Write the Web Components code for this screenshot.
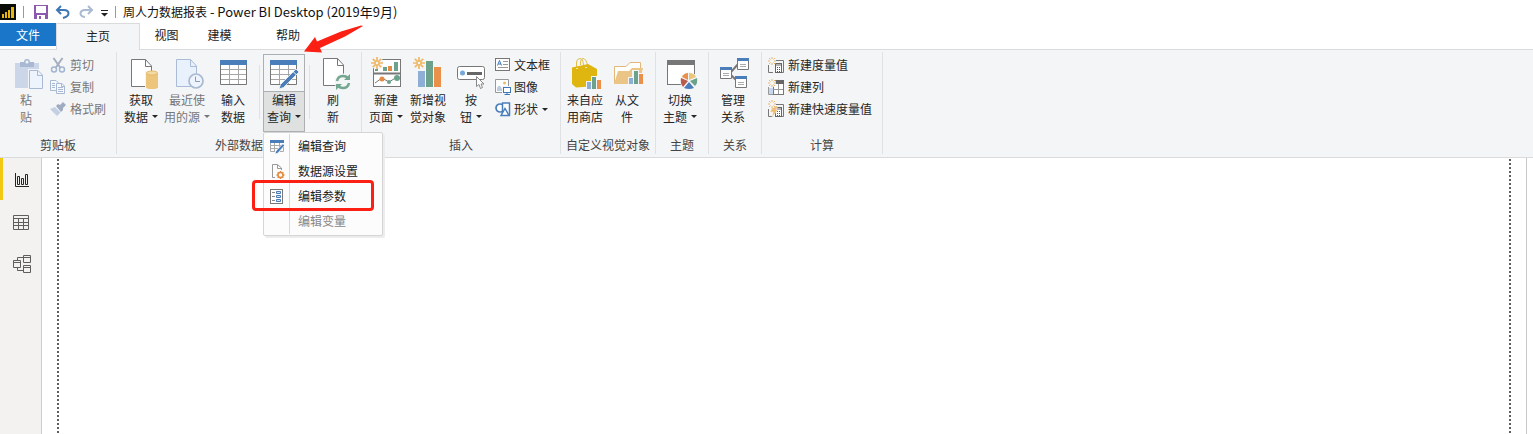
<!DOCTYPE html>
<html lang="zh-CN">
<head>
<meta charset="utf-8">
<title>周人力数据报表 - Power BI Desktop</title>
<style>
html, body { height: 100%; margin: 0; }
body { font: 12px/17px "Noto Sans CJK SC", sans-serif; color: #262626; background: #fff; overflow: hidden; }
</style>
</head>
<body>
<report-app></report-app>
<script>
const spark = (x, y, r) => {
  const d = r * 0.7, i = r * 0.35;
  return `<g stroke="#efb867" fill="none" stroke-width="${r > 5 ? 1.7 : 1}"><path d="M${x} ${y - r}V${y - i * 1.3}M${x} ${y + i * 1.3}V${y + r}M${x - r} ${y}H${x - i * 1.3}M${x + i * 1.3} ${y}H${x + r}M${x - d} ${y - d}L${x - i} ${y - i}M${x + d} ${y - d}L${x + i} ${y - i}M${x - d} ${y + d}L${x - i} ${y + i}M${x + d} ${y + d}L${x + i} ${y + i}"/><circle cx="${x}" cy="${y}" r="${i}"/></g>`;
};
const smallSpark = (x, y) => `<circle cx="${x}" cy="${y}" r="4" fill="#f4f5f7"/><path d="M${x} ${y - 4}V${y - 2}M${x} ${y + 2}V${y + 4}M${x - 4} ${y}H${x - 2}M${x + 2} ${y}H${x + 4}M${x - 3} ${y - 3}L${x - 1.5} ${y - 1.5}M${x + 3} ${y - 3}L${x + 1.5} ${y - 1.5}M${x - 3} ${y + 3}L${x - 1.5} ${y + 1.5}M${x + 3} ${y + 3}L${x + 1.5} ${y + 1.5}" stroke="#e9b568" fill="none"/>`;
const shift = (x, y, art) => `<g transform="translate(${x} ${y})">${art}</g>`;
const calc = '<path d="M8 3.5H15.5V15.5H14M.5 8V15.5H5" stroke="#777" fill="none"/><rect x="7.5" y="6.5" width="6" height="9" fill="#fff" stroke="#666"/><path d="M8 8H13" stroke="#666"/><path d="M9 10.5H10M11 10.5H12M9 12.5H10M11 12.5H12M9 14.5H10M11 14.5H12" stroke="#555"/>';
const grid = '<rect x="1" y="2" width="27" height="25" fill="#fff"/><path d="M1.5 6V26.500H27.500V6" fill="none" stroke="#777"/><path d="M2 11.500H27M2 16.500H27M2 21.500H27M10.500 7V26M19.500 7V26" stroke="#a6a6a6"/><rect x="1" y="2" width="27" height="5" fill="#4a7ebb"/>';
const sheet = (fill, stroke) => `<path d="M2.500 2.500H16.500L22.500 9V29.500H2.500Z" fill="${fill}" stroke="${stroke}"/><path d="M16.500 2.500V9.500H22.500" fill="none" stroke="${stroke}"/>`;

/* name: [width, height, drawing] */
const ICONS = {
  logo: [16, 16, '<rect width="16" height="16" fill="#0b0b05"/><path d="M2 10H4V14H2ZM5 8H7V14H5ZM8 6H10V14H8ZM11 3H14V14H11Z" fill="#e8b410"/>'],
  save: [14, 14, '<path d="M0 0H14V14H0Z" fill="#8d59ae"/><rect x="2" y="1" width="10" height="7" fill="#fff"/><rect x="3" y="10" width="8" height="4" fill="#fff"/><rect x="5" y="11" width="2" height="3" fill="#8d59ae"/>'],
  undo: [16, 14, '<path d="M6 1L2 5L6 9M2 5H9Q13.500 5 13.500 8.500Q13.500 11.500 8 13" fill="none" stroke="#3f78b5" stroke-width="2"/>'],
  redo: [16, 14, '<path d="M10 1L14 5L10 9M14 5H7Q2.500 5 2.500 8.500Q2.500 11.500 7 12" fill="none" stroke="#a9bad2" stroke-width="2"/>'],
  more: [7, 10, '<path d="M0 3.500H7" stroke="#222"/><path d="M0 6H7L3.500 9.500Z" fill="#222"/>'],
  paste: [30, 32, shift(3, 0, '<path d="M1 5H25V30H1Z" fill="#cbd6e8"/><path d="M6 9V4H10Q10 1 13 1Q16 1 16 4H20V9Z" fill="#aab9d3"/><circle cx="13" cy="4" r="1.500" fill="#f4f5f7"/><path d="M14 11H25V31H14Z" fill="#f4f5f7"/><path d="M15.500 12.500H24L28.500 17V30.500H15.500Z" fill="#eef4fd" stroke="#aab9d3"/><path d="M23.500 12.500V17.500H28.500" fill="none" stroke="#aab9d3"/>')],
  cut: [16, 16, '<path d="M3.500 1L10.500 11M12.500 1L5.500 11" stroke="#a4aebf" stroke-width="2"/><circle cx="4" cy="12.500" r="2.500" fill="none" stroke="#a3b5d1" stroke-width="1.500"/><circle cx="12" cy="12.500" r="2.500" fill="none" stroke="#a3b5d1" stroke-width="1.500"/>'],
  copy: [16, 16, '<path d="M.5 1.500H6L9.500 5V11.500H.5Z" fill="#f5f8fd" stroke="#a9b9d1"/><path d="M6.500 4.500H12L14.500 7V14.500H6.500Z" fill="#f5f8fd" stroke="#a9b9d1"/><path d="M2 4.500H5M2 6.500H5M2 8.500H5M8 8.500H13M8 10.500H13M8 12.500H13M11.500 4.500V7.500H14" stroke="#a9b9d1" fill="none"/>'],
  brush: [16, 16, '<path d="M10 4L13 1L16 4L13 7L13 9L11 11L6 5L8 3Z" fill="#9eabc0"/><path d="M5 6L10.500 11.500L7 15L0 8Z" fill="#c3cfe2"/>'],
  getdata: [30, 32, shift(3, -1, sheet('#fff', '#777') + '<path d="M16 14H23V30H16Z" fill="#f4f5f7"/><path d="M17 16V30Q17 32 23 32Q29 32 29 30V16Z" fill="#ecc57a"/><ellipse cx="23" cy="16" rx="5.500" ry="2" fill="#f3d9a4" stroke="#e7b965"/>')],
  recent: [30, 32, shift(2, -1, sheet('#e9f1fc', '#aabbd5') + '<circle cx="22" cy="24" r="7" fill="#edf4fe" stroke="#a9b9d1" stroke-width="1.700"/><path d="M21.500 19.500V24.500H26" fill="none" stroke="#8f9bae"/>')],
  table: [30, 32, shift(1, 0, grid)],
  edit: [30, 32, grid + '<path d="M10 31L11.500 26.500L27 11L30 14L14.500 29.500Z" fill="#4a7ebb" stroke="#f5f5f5" stroke-width=".8"/><path d="M24 13.500L27.500 17" stroke="#f3f3f3"/>'],
  refresh: [30, 32, shift(3, -2, sheet('#fff', '#777')) + shift(2, 0, '<circle cx="23" cy="24" r="8.500" fill="#f4f5f7"/><path d="M17 23Q18 18 23 18Q26 18 28 20M29 25Q28 30 23 30Q20 30 18 28" fill="none" stroke="#74a78f" stroke-width="2.500"/><path d="M30 16V22H24ZM16 32V26H22Z" fill="#74a78f"/>')],
  page: [32, 32, shift(1, -1, '<rect x="2.500" y="2.500" width="27" height="27" fill="#fff" stroke="#777"/><path d="M2 16.500H30" stroke="#777" stroke-width="2"/><path d="M12 10H16V14H12ZM23 5H27V14H23Z" fill="#6ca28b"/><path d="M17 9H21V14H17Z" fill="#e48c43"/><path d="M4 26L11 21L18 25L26 20" fill="none" stroke="#777"/><circle cx="11" cy="22" r="2.500" fill="#e48c43"/><circle cx="18" cy="25" r="2" fill="#6ca28b"/><circle cx="26" cy="21" r="3" fill="#6ca28b"/><circle cx="6" cy="6" r="6.500" fill="#f4f5f7"/><path d="M4 12H7V14H4Z" fill="#6ca28b"/>' + spark(6, 6, 6))],
  visual: [30, 32, shift(-1, -2, '<path d="M6 15H13V31H6Z" fill="#8eaed5"/><path d="M14 5H21V31H14Z" fill="#6ca28b"/><path d="M22 11H29V31H22Z" fill="#e9914b"/>') + spark(6, 5, 6)],
  button: [30, 32, '<rect x="1.500" y="8.500" width="27" height="13" rx="2" fill="#fff" stroke="#777"/><circle cx="6.500" cy="15" r="2.500" fill="#75a7db"/><path d="M11 15.500H26" stroke="#666" stroke-width="3"/><path d="M20.500 18.500V28.500L23 26.500L24.500 30.500L26.500 29.500L25 26H28Z" fill="#fff" stroke="#888"/>'],
  textbox: [16, 16, '<rect x="1.500" y="1.500" width="14" height="12" fill="#fff" stroke="#777"/><path d="M3.500 8.500L5.500 3.500L7.500 8.500M4.500 7H7" stroke="#3f78b5" fill="none"/><path d="M9 4.500H14M9 7.500H14M4 10.500H14" stroke="#999"/>'],
  image: [16, 16, shift(1, 0, '<path d="M.5 .5H13.500V13.500H.5Z" fill="#fff" stroke="#999"/><path d="M2 12V9Q4 5 6 8L8 12Z" fill="#bdcce1"/><circle cx="9.500" cy="4" r="1.500" fill="#ecbc6d"/><path d="M7 7H16V16H7Z" fill="#f4f5f7"/><rect x="8.500" y="8.500" width="7" height="5" fill="#fff" stroke="#3f78b5"/><path d="M12 14V16M9.500 15.500H15" stroke="#3f78b5"/>')],
  shape: [16, 16, shift(1, 0, '<circle cx="5" cy="7" r="4" fill="#fff" stroke="#4a7ebb" stroke-width="1.700"/><path d="M7.500 2H14.500V14H7.500Z" fill="#fff" stroke="#4a7ebb" stroke-width="1.500"/><path d="M6 14.500L10 7.500L14 14.500Z" fill="#fff" stroke="#4a7ebb" stroke-width="1.500"/>')],
  store: [32, 32, shift(1, 0, '<path d="M6.500 9V4Q7 .5 10 .5Q13 .5 13.500 7M10.500 7V4Q11 .5 13 .5Q16 .5 17.500 7" fill="none" stroke="#e0c04a"/><path d="M2 9.500L18 6L27 11V28L6 29.500L2 26Z" fill="#dfb60f"/><path d="M6 10.500H8M15 9.500H17" stroke="#f6e7a0"/><path d="M16 23H21V31H16ZM21 18H27V31H21ZM26 21H32V31H26Z" fill="#f4f5f7"/><path d="M17 24H21V31H17Z" fill="#8eaed5"/><path d="M22 19H26V31H22Z" fill="#6ca28b"/><path d="M27 22H31V31H27Z" fill="#e9914b"/>')],
  file: [32, 32, shift(2, -1, '<path d="M1.500 26V9.500H13L17 5.500H27.500V17" fill="#fff" stroke="#e2b878"/><path d="M1 27L5 14H16L19 11H30L26 27Z" fill="#ebc585"/><path d="M15 20H20V27H15ZM19 13H26V27H19ZM24 16H31V27H24Z" fill="#f4f5f7"/><path d="M16 21H20V27H16Z" fill="#8eaed5"/><path d="M21 14H25V27H21Z" fill="#6ca28b"/><path d="M26 17H30V27H26Z" fill="#e9914b"/>')],
  theme: [32, 32, shift(1, -1, '<rect x="2.500" y="3.500" width="27" height="24" fill="#fff" stroke="#777"/><rect x="2" y="3" width="28" height="5" fill="#777"/><circle cx="24" cy="24" r="9" fill="#f4f5f7"/><path d="M24 23V16Q29 16 31 20Z" fill="#ecc57a"/><path d="M25 24L32 21Q33 26 30 29Z" fill="#6ca28b"/><path d="M24 25L29 31Q24 33 19 31Z" fill="#4a7ebb"/><path d="M23 24L18 30Q15 26 16 21Z" fill="#b95a4a"/><path d="M23 23L17 20Q19 16 23 16Z" fill="#e9914b"/>')],
  relation: [32, 32, shift(2, -1, '<path d="M12 15L20 6M12 18L20 26" stroke="#777" stroke-width="2"/><path d="M18.500 3H29.500V12.500H18.500ZM1.500 12H12.500V21.500H1.500ZM16.500 21H27.500V30.500H16.500Z" fill="#fff" stroke="#777"/><path d="M18 1H30V4H18ZM1 10H13V13H1ZM16 19H28V22H16Z" fill="#4a7ebb"/><path d="M21 7.500H27M21 9.500H27M4 16.500H10M4 18.500H10M19 25.500H25M19 27.500H25" stroke="#aaa"/>')],
  measure: [16, 16, calc + smallSpark(4, 4)],
  column: [16, 16, '<path d="M0 9H5V15H0Z" fill="#c6d8ef"/><rect x="5.500" y="1.500" width="10" height="14" fill="#fff" stroke="#777"/><path d="M5 1H16V5H5Z" fill="#666"/><path d="M10.500 5V15M5 10.500H15" stroke="#999"/><path d="M.5 8V15.500H5" fill="none" stroke="#999"/>' + smallSpark(4, 4)],
  quick: [16, 16, calc + '<path d="M5 5H10L8 9H10L4 16L5 11H2Z" fill="#efbd76" stroke="#f4f5f7" stroke-width=".5"/>' + smallSpark(4, 3)],
  menuEdit: [16, 16, '<path d="M.5 3V12.500H5M13.500 5V12.500H10M4.500 4V12M9.500 4V8M1 6.500H11M1 9.500H8" fill="none" stroke="#aaa"/><rect y="1" width="14" height="3" fill="#4a7ebb"/><path d="M5 15L6 12L12.500 5L14.500 6.500L8 14Z" fill="#4a7ebb" stroke="#fcfcfc" stroke-width=".6"/>'],
  menuSource: [16, 16, '<path d="M2.500 13.500V.5H7.500L11.500 4V6M7.500 1V4.500H11M2.500 13.500H5" fill="none" stroke="#999"/>' + shift(1, 0, '<circle cx="9.500" cy="11" r="2.500" fill="none" stroke="#e48c43" stroke-width="1.500"/><path d="M9.500 7V8.500M9.500 13.500V15M5.500 11H7M12 11H13.500M6.700 8.200L7.700 9.200M11.300 12.800L12.300 13.800M12.300 8.200L11.300 9.200M7.700 12.800L6.700 13.800" stroke="#e48c43" stroke-width="1.500"/>')],
  menuParam: [16, 16, '<rect x=".5" y=".5" width="12" height="14" fill="#fff" stroke="#777"/><path d="M2 3.500H5M2 7.500H5M2 11.500H5" stroke="#888"/><path d="M6.500 2.500H10.500V4.500H6.500ZM6.500 6.500H10.500V8.500H6.500ZM6.500 10.500H10.500V12.500H6.500Z" fill="#d4e3f4" stroke="#4a7ebb"/>'],
  viewReport: [20, 20, '<path d="M3.500 3V16.500H17" fill="none" stroke="#252423"/><path d="M5.500 6.500H7.500V14.500H5.500ZM9.500 8.500H11.500V14.500H9.500ZM13.500 4.500H15.500V14.500H13.500Z" fill="none" stroke="#252423"/>'],
  viewData: [20, 20, '<path d="M1.500 3.500H16.500V17.500H1.500ZM1.500 6.500H16.500M1.500 10.500H16.500M1.500 13.500H16.500M6.500 6.500V17.500M11.500 6.500V17.500" fill="none" stroke="#605e5c"/>'],
  viewModel: [20, 20, '<path d="M5.500 6V3.500H11M5.500 14V16.500H11M11.500 1.500H18.500V8.500H11.500ZM1.500 6.500H8.500V13.500H1.500ZM11.500 11.500H18.500V18.500H11.500ZM11.500 3.500H18.500M1.500 8.500H8.500M11.500 13.500H18.500" fill="none" stroke="#605e5c"/>']
};

class Base extends HTMLElement {
  connectedCallback() {
    if (this.shadowRoot) return;
    this.attachShadow({ mode: 'open' }).innerHTML = this.render();
  }
  attr(name) { return this.getAttribute(name) || ''; }
}

customElements.define('app-icon', class extends Base {
  render() {
    const [w, h, art] = ICONS[this.attr('name')];
    return `<style>:host{display:block;flex:none}svg{display:block;overflow:visible}</style>
      <svg width="${w}" height="${h}" viewBox="0 0 ${w} ${h}" aria-hidden="true">${art}</svg>`;
  }
});

customElements.define('title-bar', class extends Base {
  render() {
    return `<style>
      :host{display:flex;align-items:center;height:23px;gap:7px;background:#fff;color:#111}
      button{border:0;padding:0;background:none}
      .first{padding-left:3px}
      i{width:1px;height:12px;background:#999}
      h1{margin:0;font:12px/17px "Noto Sans CJK SC",sans-serif;white-space:nowrap}
      ::slotted(span){font-size:13px}
    </style>
    <app-icon name="logo"></app-icon><i></i>
    <button class="first" aria-label="保存"><app-icon name="save"></app-icon></button>
    <button aria-label="撤消"><app-icon name="undo"></app-icon></button>
    <button aria-label="恢复"><app-icon name="redo"></app-icon></button>
    <button aria-label="自定义"><app-icon name="more"></app-icon></button><i></i>
    <h1><slot></slot></h1>`;
  }
});

customElements.define('ribbon-tab', class extends Base {
  render() {
    return `<style>
      :host{display:flex;height:27px}
      button{flex:1;border:0;padding:0 0 4px;background:none;font:inherit;color:#222}
      :host([kind=file]){height:23px}
      :host([kind=file]) button{background:#1976c9;color:#fff;padding:0 0 1px}
      :host([kind=active]) button{background:#f4f5f7;border:1px solid #dadbdc;border-width:1px 1px 0}
    </style><button role="tab"><slot></slot></button>`;
  }
});

customElements.define('ribbon-tabs', class extends Base {
  render() {
    return `<style>
      :host{display:grid;grid-template-columns:56px 84px 53px 53px 84px;height:26px;position:relative;z-index:1}
    </style><slot></slot>`;
  }
});

customElements.define('ribbon-group', class extends Base {
  render() {
    return `<style>
      :host{display:flex;flex-direction:column;box-sizing:border-box;height:102px;margin-top:2px;border-right:1px solid #dfe1e4}
      .tools{display:flex;flex:1;padding:2px 2px 0}
      .label{text-align:center;color:#444;padding-bottom:1px}
    </style><div class="tools"><slot></slot></div><div class="label">${this.attr('label')}</div>`;
  }
});

customElements.define('ribbon-button', class extends Base {
  render() {
    const [a, b] = this.attr('label').split('|');
    const caret = this.hasAttribute('caret') ? '<i></i>' : '';
    return `<style>
      :host{display:block;flex:none;width:44px}
      button{display:flex;flex-direction:column;align-items:center;box-sizing:border-box;width:100%;height:78px;padding:3px 0 0;border:1px solid transparent;background:none;font:inherit;line-height:17px;color:inherit;white-space:nowrap}
      .text{display:flex;flex-direction:column;align-items:center;width:100%;margin-top:1px;flex:1}
      .line{display:flex;align-items:center;gap:4px}
      i{border:3px solid transparent;border-top-color:currentColor;border-bottom:0}
      :host([disabled]){color:#777}
      :host([open]) button{border-color:#adb0b3;background:#f4f5f7}
      :host([open]) .text{background:#dfe1e1;box-shadow:inset 0 1px #adb0b3}
    </style><button ${this.hasAttribute('disabled') ? 'disabled' : ''}>
      <app-icon name="${this.attr('icon')}"></app-icon>
      <span class="text"><span>${a}</span><span class="line">${b}${caret}</span></span></button>`;
  }
});

customElements.define('ribbon-item', class extends Base {
  render() {
    const caret = this.hasAttribute('caret') ? '<i></i>' : '';
    return `<style>
      :host{display:block}
      button{display:flex;align-items:center;gap:4px;height:22px;padding:0;border:0;background:none;font:inherit;color:inherit;white-space:nowrap}
      span{padding-bottom:2px}
      :host([disabled]){color:#777}
      i{border:3px solid transparent;border-top-color:currentColor;border-bottom:0}
    </style><button ${this.hasAttribute('disabled') ? 'disabled' : ''}><app-icon name="${this.attr('icon')}"></app-icon><span><slot></slot></span>${caret}</button>`;
  }
});

customElements.define('ribbon-stack', class extends Base {
  render() { return `<style>:host{display:block}</style><slot></slot>`; }
});

customElements.define('ribbon-rule', class extends Base {
  render() { return `<style>:host{display:block;width:1px;height:54px;margin:11px 3px 0 4px;background:#dfe1e4}</style>`; }
});

customElements.define('drop-item', class extends Base {
  render() {
    const icon = this.attr('icon');
    return `<style>
      :host{display:block}
      button{display:grid;grid-template-columns:26px 1fr;align-items:stretch;width:100%;height:25px;padding:0;border:0;background:none;font:inherit;color:#222;text-align:left}
      .icon{display:flex;align-items:center;padding-left:6px;border-right:1px solid #d8d8d8}
      .text{padding-left:8px;line-height:23px}
      :host([disabled]) button{color:#888}
    </style><button role="menuitem" ${this.hasAttribute('disabled') ? 'disabled' : ''}><span class="icon">${icon ? `<app-icon name="${icon}"></app-icon>` : ''}</span><span class="text"><slot></slot></span></button>`;
  }
});

customElements.define('drop-menu', class extends Base {
  render() {
    return `<style>
      :host{display:block;position:absolute;z-index:3;left:263px;top:132px;box-sizing:border-box;width:120px;padding:1px 0;border:1px solid #d5d5d5;border-radius:2px;background:#fcfcfc;box-shadow:2px 2px 0 #ececec}
    </style><div role="menu"><slot></slot></div>`;
  }
});

customElements.define('red-mark', class extends Base {
  render() {
    return `<style>
      div,svg{position:absolute;z-index:4;pointer-events:none}
      div{left:252px;top:180px;box-sizing:border-box;width:122px;height:31px;border:3px solid #fb2013;border-radius:4px}
      svg{left:304px;top:25px}
    </style><div></div>
    <svg width="60" height="28" viewBox="0 0 60 28" aria-hidden="true"><path d="M59 1L57 .5L37 6.500L13 16.500L11 12L0 26.500L18 27.500L16 23L41 11.500Z" fill="#fb2013"/></svg>`;
  }
});

customElements.define('view-rail', class extends Base {
  render() {
    return `<style>
      :host{display:block;background:#f3f2f1;border-right:1px solid #cfcdcb}
      button{display:flex;align-items:center;box-sizing:border-box;width:100%;height:42px;padding:2px 0 0 9px;border:0;border-left:3px solid transparent;background:none}
      button.on{border-color:#f2c811}
    </style><nav>
      <button class="on" aria-label="报表"><app-icon name="viewReport"></app-icon></button>
      <button aria-label="数据"><app-icon name="viewData"></app-icon></button>
      <button aria-label="模型"><app-icon name="viewModel"></app-icon></button></nav>`;
  }
});

customElements.define('report-canvas', class extends Base {
  render() {
    return `<style>
      :host{display:flex;background:#fff;margin-right:6px;border-right:1px solid #c8c8c8;padding:1px 15px 0}
      .page{flex:1;--dots:repeating-linear-gradient(#605e5c 0 2px,transparent 2px 4px);background:var(--dots) left/2px 100% no-repeat,var(--dots) right/2px 100% no-repeat}
    </style><div class="page"></div>`;
  }
});

customElements.define('report-app', class extends Base {
  render() {
    return `<style>
      :host{display:flex;flex-direction:column;height:100vh;position:relative}
      .ribbon{display:grid;grid-template-columns:117px 245px 199px 95px 53px 53px 121px;background:#f4f5f7;border:1px solid #dadbdc;border-width:1px 0;height:107px;flex:none}
      .work{display:grid;grid-template-columns:42px 1fr;flex:1;min-height:0}
      .wide{width:48px}
      .mid{width:46px}
      .slim{width:40px}
      .open{width:42px}
      .inset{padding-left:4px}
    </style>
    <title-bar>周人力数据报表<span> - Power BI Desktop (2019年9月)</span></title-bar>
    <ribbon-tabs role="tablist"><ribbon-tab kind="file">文件</ribbon-tab><ribbon-tab kind="active">主页</ribbon-tab><ribbon-tab>视图</ribbon-tab><ribbon-tab>建模</ribbon-tab><ribbon-tab>帮助</ribbon-tab></ribbon-tabs>
    <div class="ribbon">
      <ribbon-group label="剪贴板">
        <ribbon-button class="wide" icon="paste" label="粘|贴" disabled></ribbon-button>
        <ribbon-stack><ribbon-item icon="cut" disabled>剪切</ribbon-item><ribbon-item icon="copy" disabled>复制</ribbon-item><ribbon-item icon="brush" disabled>格式刷</ribbon-item></ribbon-stack>
      </ribbon-group>
      <ribbon-group label="外部数据">
        <ribbon-button icon="getdata" label="获取|数据" caret></ribbon-button>
        <ribbon-button class="wide" icon="recent" label="最近使|用的源" caret disabled></ribbon-button>
        <ribbon-button icon="table" label="输入|数据"></ribbon-button>
        <ribbon-rule></ribbon-rule>
        <ribbon-button class="open" icon="edit" label="编辑|查询" caret open></ribbon-button>
        <ribbon-rule></ribbon-rule>
        <ribbon-button class="slim" icon="refresh" label="刷|新"></ribbon-button>
      </ribbon-group>
      <ribbon-group label="插入">
        <ribbon-button icon="page" label="新建|页面" caret></ribbon-button>
        <ribbon-button class="slim" icon="visual" label="新增视|觉对象"></ribbon-button>
        <ribbon-button class="mid" icon="button" label="按|钮" caret></ribbon-button>
        <ribbon-stack><ribbon-item icon="textbox">文本框</ribbon-item><ribbon-item icon="image">图像</ribbon-item><ribbon-item icon="shape" caret>形状</ribbon-item></ribbon-stack>
      </ribbon-group>
      <ribbon-group label="自定义视觉对象">
        <ribbon-button icon="store" label="来自应|用商店"></ribbon-button>
        <ribbon-button class="slim" icon="file" label="从文|件"></ribbon-button>
      </ribbon-group>
      <ribbon-group label="主题"><ribbon-button icon="theme" label="切换|主题" caret></ribbon-button></ribbon-group>
      <ribbon-group label="关系"><ribbon-button icon="relation" label="管理|关系"></ribbon-button></ribbon-group>
      <ribbon-group label="计算">
        <ribbon-stack class="inset"><ribbon-item icon="measure">新建度量值</ribbon-item><ribbon-item icon="column">新建列</ribbon-item><ribbon-item icon="quick">新建快速度量值</ribbon-item></ribbon-stack>
      </ribbon-group>
    </div>
    <div class="work"><view-rail></view-rail><report-canvas></report-canvas></div>
    <drop-menu><drop-item icon="menuEdit">编辑查询</drop-item><drop-item icon="menuSource">数据源设置</drop-item><drop-item icon="menuParam">编辑参数</drop-item><drop-item disabled>编辑变量</drop-item></drop-menu>
    <red-mark></red-mark>`;
  }
});
</script>
</body>
</html>
